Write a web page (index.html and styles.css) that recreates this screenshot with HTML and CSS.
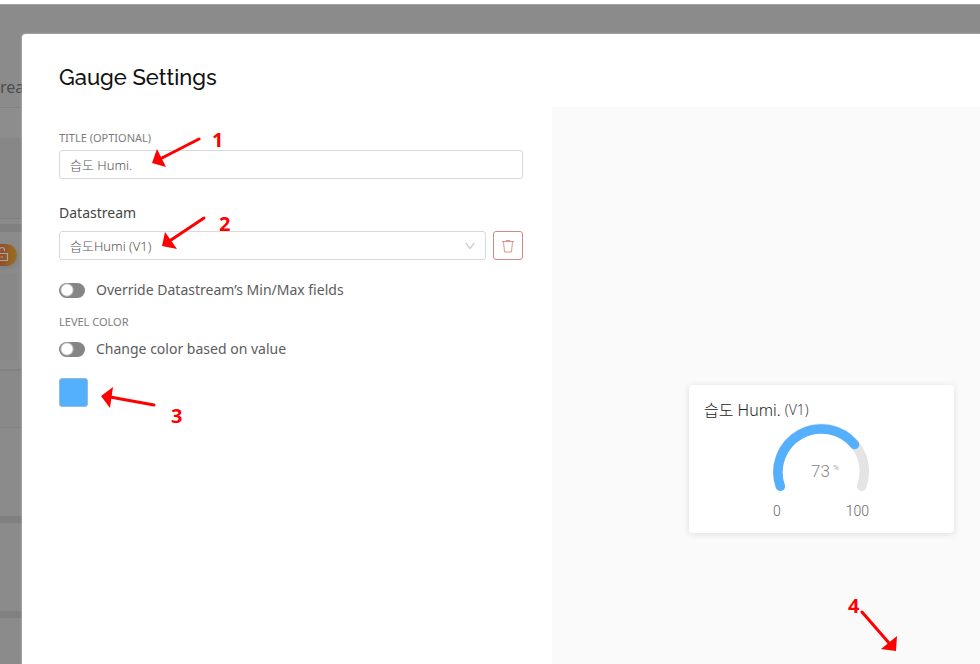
FILE: index.html
```html
<!DOCTYPE html>
<html lang="ko">
<head>
<meta charset="utf-8">
<meta name="viewport" content="width=device-width, initial-scale=1">
<title>Gauge Settings</title>
<link rel="stylesheet" href="styles.css">
</head>
<body>
<div class="app">
  <div class="backdrop">
    <div class="bg-tabs"><span>rea</span></div>
    <div class="bg-bar"></div>
    <div class="bg-block"></div>
    <div class="bg-gap"></div>
    <div class="bg-card">
      <div class="lock">
        <svg width="16" height="16" viewBox="0 0 16 16" fill="none" stroke="#b3a097" stroke-width="1.2"><path d="M1 7.500h11.500v7h-11.500zM4.500 7.500V4a2.500 2.500 0 0 1 5 0V5M5.500 11h2.500"/></svg>
      </div>
      <div class="bg-inner"></div>
    </div>
    <div class="bg-row"></div>
    <div class="bg-panel"></div>
    <div class="bg-gap"></div>
    <div class="bg-panel"></div>
    <div class="bg-gap"></div>
    <div class="bg-rest"></div>
  </div>
  <main class="modal" role="dialog" aria-labelledby="heading">
    <h1 id="heading">Gauge Settings</h1>
    <div class="columns">
      <form class="form">
        <label class="caption" for="title">TITLE (OPTIONAL)</label>
        <input class="field" id="title" type="text" value="습도 Humi.">
        <label class="subhead" for="stream">Datastream</label>
        <div class="stream">
          <div class="select">
            <select class="field" id="stream"><option>습도Humi (V1)</option></select>
            <svg class="chevron" width="10" height="8" viewBox="0 0 10 8" fill="none" stroke="#c4c4c4" stroke-width="1.200"><path d="M.8 1l4.200 5.500L9.200 1"/></svg>
          </div>
          <button class="delete" type="button" aria-label="Delete datastream">
            <svg width="14" height="14" viewBox="0 0 14 14" fill="none" stroke="#d9968f" stroke-width="1"><path d="M1 2.500h12M5 2.300V1.500h4v.8M2.500 2.500l1 10.500h7l1-10.500"/></svg>
          </button>
        </div>
        <label class="toggle"><input type="checkbox" role="switch"><span>Override Datastream’s Min/Max fields</span></label>
        <div class="caption level">LEVEL COLOR</div>
        <label class="toggle"><input type="checkbox" role="switch"><span>Change color based on value</span></label>
        <button class="swatch" type="button" aria-label="Level color"></button>
      </form>
      <section class="preview">
        <article class="card">
          <h2>습도 Humi. <small>(V1)</small></h2>
          <div class="gauge">
            <svg width="96" height="70" viewBox="1 0 96 70" fill="none" stroke-width="9.500" stroke-linecap="round">
              <path stroke="#e4e4e4" d="M8.300 63.300A43.300 43.300 0 1 1 89.700 63.300"/>
              <path stroke="#54affc" d="M8.300 63.300A43.300 43.300 0 0 1 82.500 21.500"/>
            </svg>
            <div class="value">73<sup>%</sup></div>
          </div>
          <div class="range"><span>0</span><span>100</span></div>
        </article>
      </section>
    </div>
  </main>
  <svg class="notes" width="980" height="664" viewBox="0 0 980 664">
    <g stroke="#f00" stroke-width="3" stroke-linecap="round">
      <path d="M199 139L160 159M204 218L171 240M154 405L110 397M862 612L889 643"/>
    </g>
    <g fill="#f00">
      <path d="M152 163L157 149L166 167zM162 246L165 232L177 249zM101 396L113 387L110 408zM896 651L881 649L897 636z"/>
      <text x="212" y="147">1</text>
      <text x="219" y="231">2</text>
      <text x="171" y="423">3</text>
      <text x="848" y="613">4</text>
    </g>
  </svg>
</div>
</body>
</html>
```
FILE: styles.css
```css
* { box-sizing: border-box; }
body {
  margin: 0;
  background: #fff;
  font-family: "Noto Sans", "Noto Sans CJK KR", sans-serif;
  color: #555;
}
.app {
  position: relative;
  min-height: 100vh;
  padding: 34px 0 0 22px;
  overflow: hidden;
}
.backdrop {
  position: absolute;
  inset: 4px 0 0;
  display: flex;
  flex-direction: column;
  background: #8b8b8b;
  border-top: 1px solid #a3a3a3;
}
.bg-tabs {
  height: 103px;
  padding-top: 71px;
  border-bottom: 1px solid #828282;
  font-size: 16px;
  line-height: 22px;
  color: #4d4d4d;
}
.bg-bar { height: 30px; background: #8d8d8d; }
.bg-block { height: 81px; background: #878787; border-bottom: 1px solid #7f7f7f; }
.bg-gap { height: 7px; background: #808080; }
.bg-block + .bg-gap { border-top: 5px solid #8b8b8b; height: 13px; }
.bg-card { height: 139px; padding-top: 12px; border-bottom: 2px solid #828282; }
.lock {
  display: flex;
  align-items: center;
  width: 17px;
  height: 22px;
  padding-bottom: 2px;
  border-radius: 0 11px 11px 0;
  background: linear-gradient(90deg, #8f4f2f, #98701f);
  box-shadow: 0 2px 5px #7c7c7c;
}
.lock svg { flex: none; margin-left: -5px; }
.bg-inner { width: 17px; height: 87px; margin-top: 7px; background: #888; }
.bg-row { height: 57px; background: #898989; border-bottom: 1px solid #828282; }
.bg-panel { height: 88px; }
.bg-rest { flex: 1; }
.modal {
  position: relative;
  display: flex;
  flex-direction: column;
  min-height: calc(100vh - 34px);
  background: #fff;
  border-radius: 4px 0 0 0;
  box-shadow: 0 0 2px #ddd;
}
h1 {
  margin: 0;
  padding: 27px 37px 14px;
  font: 500 22px/32px Raleway, Lato, sans-serif;
  color: #111;
}
.columns {
  flex: 1;
  display: grid;
  grid-template-columns: 530fr 428fr;
}
.form { padding: 23px 29px 0 37px; }
.caption {
  display: block;
  margin-bottom: 4px;
  font-size: 11px;
  line-height: 16px;
  color: #7c7c7c;
}
.field {
  display: block;
  width: 100%;
  height: 29px;
  padding: 0 10px;
  border: 1px solid #d9d9d9;
  border-radius: 3px;
  background: #fff;
  font-family: "Noto Sans", "Noto Sans CJK KR", sans-serif;
  font-size: 13px;
  font-weight: 300;
  color: #555;
  appearance: none;
}
.subhead {
  display: block;
  margin: 24px 0 8px;
  font-size: 14px;
  line-height: 20px;
  color: #444;
}
.stream { display: flex; gap: 7px; }
.select { position: relative; flex: 1; }
.chevron { position: absolute; right: 11px; top: 11px; }
.delete {
  display: grid;
  place-items: center;
  width: 30px;
  height: 29px;
  padding: 0;
  border: 1px solid #d08b84;
  border-radius: 3px;
  background: #fff;
}
.toggle {
  display: flex;
  align-items: center;
  gap: 11px;
  height: 22px;
  font-size: 14px;
  line-height: 22px;
  color: #5c5c5c;
}
.stream + .toggle { margin-top: 19px; }
.toggle input {
  appearance: none;
  width: 26px;
  height: 15px;
  margin: 0;
  border-radius: 8px;
  background: radial-gradient(circle at 8px 7px, #fff 5px, #858585 7px);
}
.level { margin: 13px 0 8px; }
.swatch {
  display: block;
  width: 29px;
  height: 29px;
  margin-top: 18px;
  border: 1px solid #8fbce2;
  border-radius: 3px;
  background: #54affc;
}
.preview {
  display: flex;
  align-items: flex-start;
  justify-content: flex-end;
  padding: 278px 26px 0;
  background: #fafafa;
}
.card {
  width: 265px;
  padding: 12px 16px 13px 15px;
  border-radius: 4px;
  background: #fff;
  box-shadow: 0 1px 6px #ddd;
}
h2 {
  margin: 0;
  font-size: 16px;
  font-weight: 300;
  line-height: 25px;
  color: #222;
}
h2 small { font-size: 14px; vertical-align: 1px; color: #444; }
.gauge { display: grid; justify-items: center; }
.gauge svg, .value { grid-area: 1 / 1; }
.value, .range {
  font-family: "Liberation Sans Narrow", Roboto, sans-serif;
  font-weight: 300;
  color: #888;
}
.value { padding: 38px 0 0 8px; font-size: 17px; line-height: 20px; }
.value sup { margin-left: 3px; font-size: 8px; line-height: 8px; vertical-align: 7px; }
.range {
  display: flex;
  justify-content: space-between;
  width: 96px;
  margin: 9px auto 0;
  font-size: 14px;
  line-height: 18px;
  color: #666;
}
.notes { position: absolute; left: 0; top: 0; pointer-events: none; }
.notes text { font: 700 20px "Noto Sans", sans-serif; }
```
